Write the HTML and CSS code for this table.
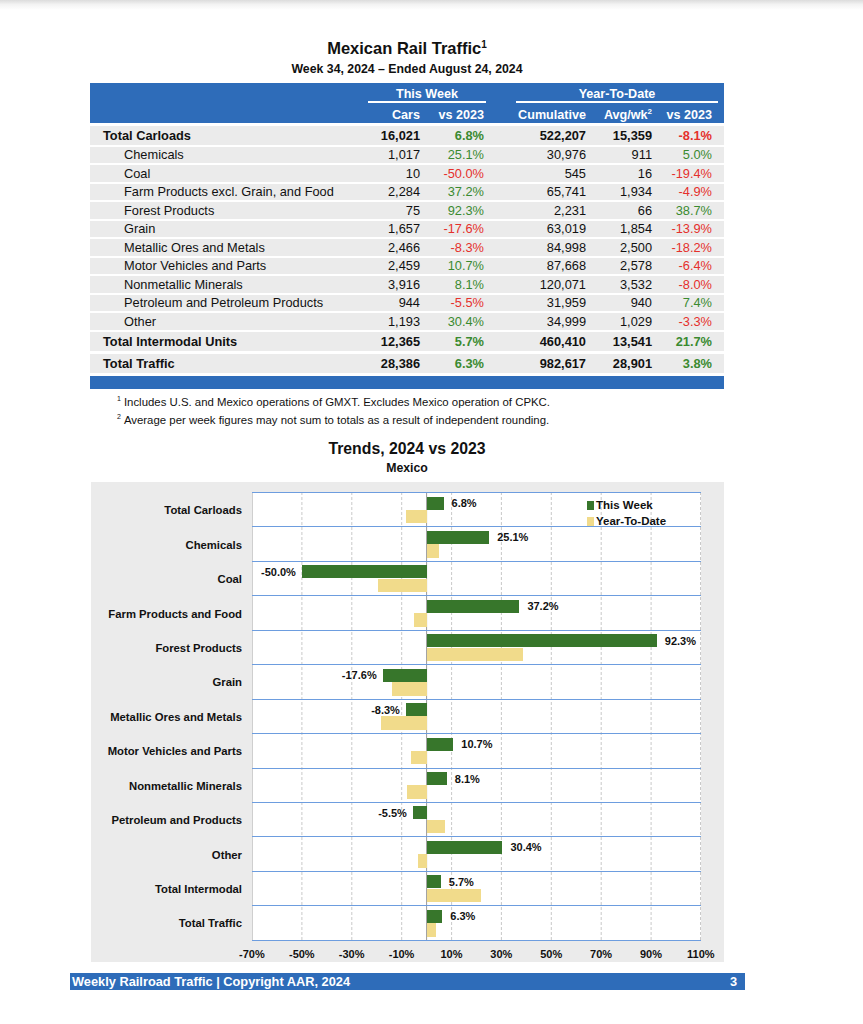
FILE: index.html
```html
<!DOCTYPE html>
<html>
<head>
<meta charset="utf-8">
<title>Mexican Rail Traffic</title>
<link rel="stylesheet" href="styles.css">
</head>
<body>
<div class="shadow"></div>
<div class="page">
  <div class="content">
    <h1 class="title">Mexican Rail Traffic<sup>1</sup></h1>
    <div class="subtitle">Week 34, 2024 – Ended August 24, 2024</div>

    <div class="table">
      <div class="head">
        <div class="hrow">
          <div class="group tw">This Week</div>
          <div class="group ytd">Year-To-Date</div>
        </div>
        <div class="hrow cols">
          <div class="c2">Cars</div>
          <div class="c3">vs 2023</div>
          <div class="c4">Cumulative</div>
          <div class="c5">Avg/wk<sup>2</sup></div>
          <div class="c6">vs 2023</div>
        </div>
      </div>

      <div class="row total"><div class="lbl">Total Carloads</div><div>16,021</div><div class="up">6.8%</div><div>522,207</div><div>15,359</div><div class="down">-8.1%</div></div>
      <div class="row sub"><div class="lbl">Chemicals</div><div>1,017</div><div class="up">25.1%</div><div>30,976</div><div>911</div><div class="up">5.0%</div></div>
      <div class="row sub"><div class="lbl">Coal</div><div>10</div><div class="down">-50.0%</div><div>545</div><div>16</div><div class="down">-19.4%</div></div>
      <div class="row sub"><div class="lbl">Farm Products excl. Grain, and Food</div><div>2,284</div><div class="up">37.2%</div><div>65,741</div><div>1,934</div><div class="down">-4.9%</div></div>
      <div class="row sub"><div class="lbl">Forest Products</div><div>75</div><div class="up">92.3%</div><div>2,231</div><div>66</div><div class="up">38.7%</div></div>
      <div class="row sub"><div class="lbl">Grain</div><div>1,657</div><div class="down">-17.6%</div><div>63,019</div><div>1,854</div><div class="down">-13.9%</div></div>
      <div class="row sub"><div class="lbl">Metallic Ores and Metals</div><div>2,466</div><div class="down">-8.3%</div><div>84,998</div><div>2,500</div><div class="down">-18.2%</div></div>
      <div class="row sub"><div class="lbl">Motor Vehicles and Parts</div><div>2,459</div><div class="up">10.7%</div><div>87,668</div><div>2,578</div><div class="down">-6.4%</div></div>
      <div class="row sub"><div class="lbl">Nonmetallic Minerals</div><div>3,916</div><div class="up">8.1%</div><div>120,071</div><div>3,532</div><div class="down">-8.0%</div></div>
      <div class="row sub"><div class="lbl">Petroleum and Petroleum Products</div><div>944</div><div class="down">-5.5%</div><div>31,959</div><div>940</div><div class="up">7.4%</div></div>
      <div class="row sub"><div class="lbl">Other</div><div>1,193</div><div class="up">30.4%</div><div>34,999</div><div>1,029</div><div class="down">-3.3%</div></div>
      <div class="row total"><div class="lbl">Total Intermodal Units</div><div>12,365</div><div class="up">5.7%</div><div>460,410</div><div>13,541</div><div class="up">21.7%</div></div>
      <div class="row total last"><div class="lbl">Total Traffic</div><div>28,386</div><div class="up">6.3%</div><div>982,617</div><div>28,901</div><div class="up">3.8%</div></div>
      <div class="band"></div>
    </div>

    <div class="notes">
      <p><sup>1</sup>Includes U.S. and Mexico operations of GMXT. Excludes Mexico operation of CPKC.</p>
      <p><sup>2</sup>Average per week figures may not sum to totals as a result of independent rounding.</p>
    </div>

    <h2 class="ctitle">Trends, 2024 vs 2023</h2>
    <div class="csub">Mexico</div>

    <div class="chart">
      <div class="chartbody">
        <div class="labels">
          <div>Total Carloads</div>
          <div>Chemicals</div>
          <div>Coal</div>
          <div>Farm Products and Food</div>
          <div>Forest Products</div>
          <div>Grain</div>
          <div>Metallic Ores and Metals</div>
          <div>Motor Vehicles and Parts</div>
          <div>Nonmetallic Minerals</div>
          <div>Petroleum and Products</div>
          <div>Other</div>
          <div>Total Intermodal</div>
          <div>Total Traffic</div>
        </div>
        <div class="plot">
          <svg class="grid" width="449" height="448" viewBox="0 0 449 448">
            <g stroke="#c9c9c9" stroke-width="1" stroke-dasharray="3 2">
              <line x1="49.9" y1="0" x2="49.9" y2="448"/>
              <line x1="99.8" y1="0" x2="99.8" y2="448"/>
              <line x1="149.7" y1="0" x2="149.7" y2="448"/>
              <line x1="199.6" y1="0" x2="199.6" y2="448"/>
              <line x1="249.4" y1="0" x2="249.4" y2="448"/>
              <line x1="299.3" y1="0" x2="299.3" y2="448"/>
              <line x1="349.2" y1="0" x2="349.2" y2="448"/>
              <line x1="399.1" y1="0" x2="399.1" y2="448"/>
              <line x1="448.5" y1="0" x2="448.5" y2="448"/>
            </g>
            <line x1="0.5" y1="0" x2="0.5" y2="448" stroke="#cfcfcf" stroke-width="1"/>
            <line x1="174.6" y1="0" x2="174.6" y2="448" stroke="#9a9a9a" stroke-width="1"/>
          </svg>
          <div class="prow"><div class="bar tw pos" style="--v:6.8"><span>6.8%</span></div><div class="bar ytd neg" style="--v:-8.1"></div></div>
          <div class="prow"><div class="bar tw pos" style="--v:25.1"><span>25.1%</span></div><div class="bar ytd pos" style="--v:5.0"></div></div>
          <div class="prow"><div class="bar tw neg" style="--v:-50.0"><span>-50.0%</span></div><div class="bar ytd neg" style="--v:-19.4"></div></div>
          <div class="prow"><div class="bar tw pos" style="--v:37.2"><span>37.2%</span></div><div class="bar ytd neg" style="--v:-4.9"></div></div>
          <div class="prow"><div class="bar tw pos" style="--v:92.3"><span>92.3%</span></div><div class="bar ytd pos" style="--v:38.7"></div></div>
          <div class="prow"><div class="bar tw neg" style="--v:-17.6"><span>-17.6%</span></div><div class="bar ytd neg" style="--v:-13.9"></div></div>
          <div class="prow"><div class="bar tw neg" style="--v:-8.3"><span>-8.3%</span></div><div class="bar ytd neg" style="--v:-18.2"></div></div>
          <div class="prow"><div class="bar tw pos" style="--v:10.7"><span>10.7%</span></div><div class="bar ytd neg" style="--v:-6.4"></div></div>
          <div class="prow"><div class="bar tw pos" style="--v:8.1"><span>8.1%</span></div><div class="bar ytd neg" style="--v:-8.0"></div></div>
          <div class="prow"><div class="bar tw neg" style="--v:-5.5"><span>-5.5%</span></div><div class="bar ytd pos" style="--v:7.4"></div></div>
          <div class="prow"><div class="bar tw pos" style="--v:30.4"><span>30.4%</span></div><div class="bar ytd neg" style="--v:-3.3"></div></div>
          <div class="prow"><div class="bar tw pos" style="--v:5.7"><span>5.7%</span></div><div class="bar ytd pos" style="--v:21.7"></div></div>
          <div class="prow"><div class="bar tw pos" style="--v:6.3"><span>6.3%</span></div><div class="bar ytd pos" style="--v:3.8"></div></div>
          <div class="legend">
            <div class="li"><i class="sw g"></i>This Week</div>
            <div class="li"><i class="sw y"></i>Year-To-Date</div>
          </div>
        </div>
      </div>
      <div class="axis">
        <div>-70%</div><div>-50%</div><div>-30%</div><div>-10%</div><div>10%</div><div>30%</div><div>50%</div><div>70%</div><div>90%</div><div>110%</div>
      </div>
    </div>
  </div>
  <div class="footer">
    <span>Weekly Railroad Traffic | Copyright AAR, 2024</span>
    <span>3</span>
  </div>
</div>
</body>
</html>
```

FILE: styles.css
```css
* { box-sizing: border-box; }
html, body { margin: 0; padding: 0; background: #ffffff; }
body {
  font-family: "Liberation Sans", Arial, Helvetica, sans-serif;
  color: #111;
  position: relative;
}
.shadow {
  position: absolute;
  left: 0; top: 0; right: 0;
  height: 10px;
  background: linear-gradient(to bottom, #dcdcdc 0%, #f3f3f3 45%, rgba(255,255,255,0) 100%);
}
.page {
  width: 675px;
  margin-left: 70px;
  padding-top: 38px;
}
.content {
  width: 634px;
  margin-left: 20px;
}
.title {
  margin: 0;
  font-size: 16.5px;
  line-height: 20px;
  font-weight: bold;
  text-align: center;
}
.title sup { font-size: 10px; line-height: 0; vertical-align: 6px; }
.subtitle {
  margin-top: 3px;
  font-size: 12.3px;
  line-height: 16px;
  font-weight: bold;
  text-align: center;
}

/* table */
.table { margin-top: 6px; }
.head {
  background: #2e6cb9;
  color: #fff;
  font-weight: bold;
  font-size: 12.6px;
  height: 40px;
}
.hrow, .row {
  display: grid;
  grid-template-columns: 257px 60px 64px 102px 66px 60px;
  padding-left: 13px;
  padding-right: 12px;
}
.hrow { height: 20px; align-items: center; }
.hrow.cols { padding-top: 4px; }
.hrow .group {
  text-align: center;
  border-bottom: 2px solid #fff;
  height: 19px;
  line-height: 18px;
  padding-top: 1px;
  align-self: start;
  margin-top: 1px;
}
.hrow .tw { grid-column: 2 / 4; margin-left: 8px; margin-right: -2px; }
.hrow .ytd { grid-column: 4 / 7; margin-left: 32px; margin-right: -6px; }
.hrow .c2 { grid-column: 2; text-align: right; }
.hrow .c3, .hrow .c4, .hrow .c5, .hrow .c6 { text-align: right; }
.hrow sup { font-size: 8px; line-height: 0; vertical-align: 5px; }

.row {
  background: #ebebeb;
  align-items: center;
  font-size: 12.8px;
  margin-top: 2px;
}
.row > div { text-align: right; white-space: nowrap; }
.row > .lbl { text-align: left; }
.row.total { height: 19px; font-weight: bold; margin-top: 2.5px; }
.row.total:first-of-type { margin-top: 3px; }
.row.sub { height: 16.5px; }
.row.sub .lbl { padding-left: 21px; }
.row.last { margin-top: 3px; }
.up { color: #3a8a30; }
.down { color: #e5302c; }
.band { background: #2e6cb9; height: 13px; margin-top: 3px; }

/* notes */
.notes { margin-top: 4px; padding-left: 27px; font-size: 11.4px; }
.notes p { margin: 0; line-height: 18px; }
.notes sup { font-size: 7px; vertical-align: 5px; line-height: 0; margin-right: 3px; }

.ctitle {
  margin: 10px 0 0;
  font-size: 15.8px;
  line-height: 20px;
  font-weight: bold;
  text-align: center;
}
.csub {
  margin-top: 1px;
  font-size: 12.3px;
  line-height: 16px;
  font-weight: bold;
  text-align: center;
}

/* chart */
.chart {
  margin-top: 6px;
  margin-left: 1px;
  width: 633px;
  height: 480px;
  background: #ebebeb;
  padding-top: 10px;
}
.chartbody { display: flex; }
.labels {
  width: 161px;
  display: flex;
  flex-direction: column;
}
.labels div {
  height: 34.44px;
  display: flex;
  align-items: center;
  justify-content: flex-end;
  padding-right: 10px;
  padding-top: 2px;
  font-size: 11.3px;
  font-weight: bold;
}
.plot {
  position: relative;
  width: 449px;
  background: #fff;
  border-bottom: 1.5px solid #6d9ddf;
}
.grid { position: absolute; left: 0; top: 0; }
.prow {
  position: relative;
  height: 34.44px;
  border-top: 1.5px solid #6d9ddf;
}
.bar { position: absolute; }
.bar.tw { top: 3.5px; height: 13px; background: #37762b; }
.bar.ytd { top: 16.8px; height: 13.6px; background: #f1db8b; }
.bar.pos { left: 174.6px; width: calc(var(--v) * 2.4944px); }
.bar.neg { left: calc(174.6px + var(--v) * 2.4944px); width: calc(var(--v) * -2.4944px); }
.bar span {
  position: absolute;
  top: 50%;
  transform: translateY(-50%);
  font-size: 11px;
  font-weight: bold;
  color: #111;
  white-space: nowrap;
  line-height: 13px;
}
.bar.pos span { left: calc(100% + 8px); }
.bar.neg span { right: calc(100% + 6px); }

.legend {
  position: absolute;
  left: 335px;
  top: 5px;
  font-size: 11.5px;
  font-weight: bold;
}
.li { display: flex; align-items: center; height: 16px; }
.sw { display: inline-block; width: 7px; height: 9px; margin-right: 2px; }
.sw.g { background: #37762b; }
.sw.y { background: #f1db8b; }

.axis {
  display: grid;
  grid-template-columns: repeat(10, 49.89px);
  margin-left: 136px;
  margin-top: 6px;
  font-size: 11px;
  font-weight: bold;
}
.axis div { text-align: center; line-height: 14px; }

/* footer */
.footer {
  margin-top: 11px;
  height: 17px;
  background: #2e6cb9;
  color: #fff;
  font-weight: bold;
  font-size: 12.8px;
  display: flex;
  justify-content: space-between;
  align-items: center;
  padding: 0 8px 0 2px;
}
```
